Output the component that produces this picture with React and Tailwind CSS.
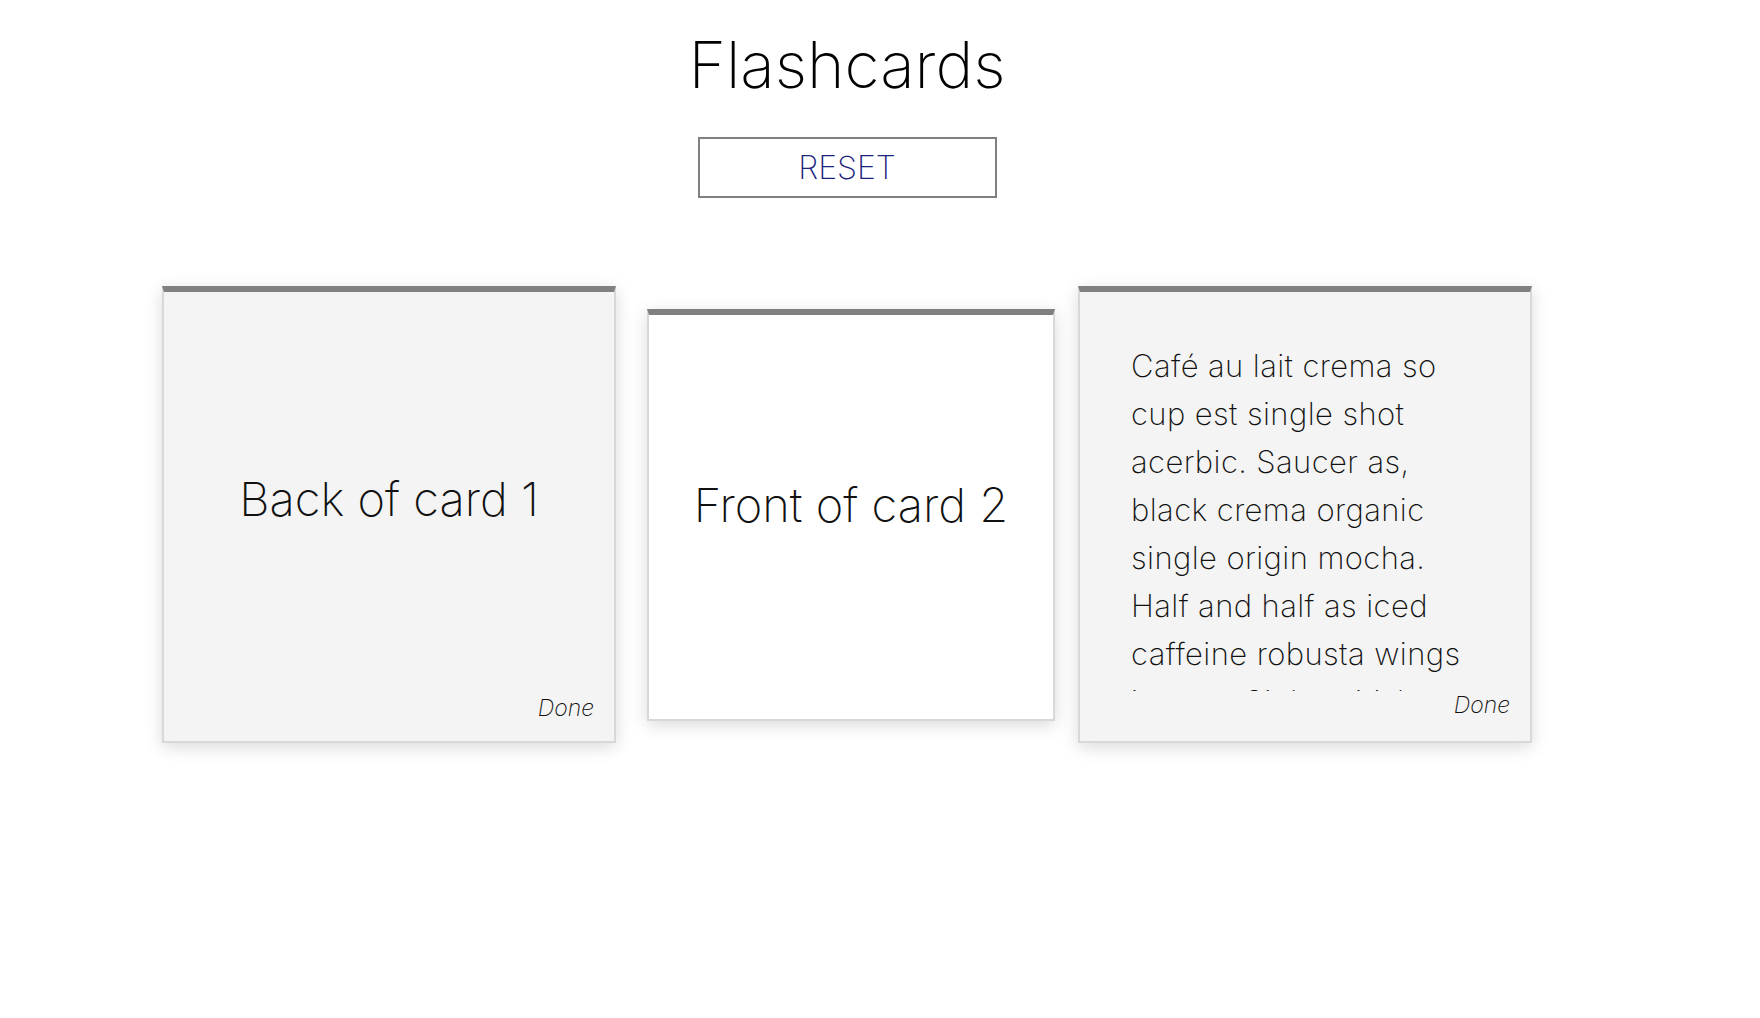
import { useState } from "react";

const CARDS = [
  { id: 1, front: "Front of card 1", back: "Back of card 1" },
  { id: 2, front: "Front of card 2", back: "Back of card 2" },
  {
    id: 3,
    front: "Front of card 3",
    back:
      "Café au lait crema so cup est single shot acerbic. Saucer as, black crema organic single origin mocha. Half and half as iced caffeine robusta wings instant. Siphon irish, Sumatra cortado aroma variety to go."
  }
];

function Card({ card, flipped, onFlip, small }) {
  const longText = flipped && card.back.length > 40;
  const base =
    "flex flex-col border-2 border-t-[6px] border-[#d8d8d8] border-t-[#808080] shadow-[0_4px_16px_rgba(0,0,0,0.15)] cursor-pointer";

  if (small) {
    return (
      <div
        onClick={onFlip}
        className={`${base} ml-[31px] h-[412px] w-[408px] bg-white`}
      >
        <div className="flex flex-1 items-center justify-center pb-[25px]">
          <p className="text-[47px] leading-none font-extralight text-[#111]">
            {flipped ? card.back : card.front}
          </p>
        </div>
      </div>
    );
  }

  return (
    <div
      onClick={onFlip}
      className={`${base} h-[457px] w-[454px] bg-[#f4f4f4]`}
    >
      {longText ? (
        <div className="mt-[50px] h-[349px] overflow-hidden pl-[51px] pr-[50px]">
          <p className="text-[31px] leading-[48px] tracking-[0.4px] font-[250] text-[#111]">
            {card.back}
          </p>
        </div>
      ) : (
        <div className="flex flex-1 items-center justify-center pt-[7px]">
          <p className="text-[47px] leading-none font-extralight text-[#111]">
            {flipped ? card.back : card.front}
          </p>
        </div>
      )}
      <div
        className={`flex justify-end pr-[20px] ${
          longText ? "mt-auto pb-[24px]" : "pb-[21px]"
        }`}
      >
        <span className="text-[23px] leading-none font-[250] italic text-[#111]">
          Done
        </span>
      </div>
    </div>
  );
}

export default function App() {
  const [flipped, setFlipped] = useState({ 1: true, 2: false, 3: true });

  const toggle = (id) => setFlipped((prev) => ({ ...prev, [id]: !prev[id] }));
  const reset = () => setFlipped({ 1: false, 2: false, 3: false });

  return (
    <div
      className="min-h-screen w-full bg-white"
      style={{ fontFamily: "Inter, 'Noto Sans', sans-serif" }}
    >
      <div className="flex flex-col items-center pr-[66px]">
        <h1 className="mt-[33px] text-[64px] leading-none font-extralight text-black">
          Flashcards
        </h1>
        <button
          onClick={reset}
          className="mt-[40px] flex h-[61px] w-[299px] items-center justify-center border-2 border-[#808080] bg-white text-[32px] leading-none font-[250] text-[#1a237e]"
        >
          RESET
        </button>
      </div>

      <div className="mt-[88px] flex items-center pl-[162px]">
        <Card card={CARDS[0]} flipped={flipped[1]} onFlip={() => toggle(1)} />
        <Card card={CARDS[1]} flipped={flipped[2]} onFlip={() => toggle(2)} small />
        <div className="ml-[23px]">
          <Card card={CARDS[2]} flipped={flipped[3]} onFlip={() => toggle(3)} />
        </div>
      </div>
    </div>
  );
}
